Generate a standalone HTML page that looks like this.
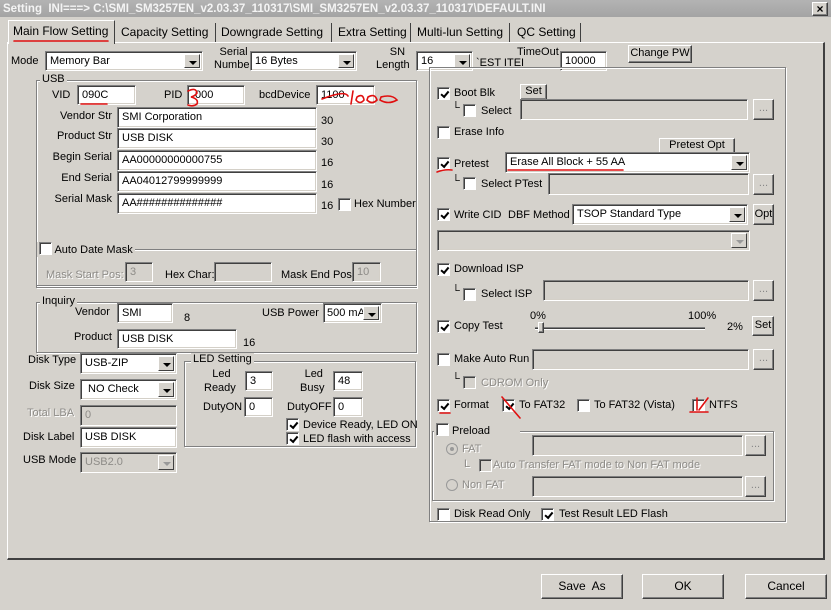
<!DOCTYPE html>
<html><head><meta charset="utf-8">
<style>
*{margin:0;padding:0;box-sizing:border-box}
body{width:831px;height:610px;background:#d5d2cc;font-family:"Liberation Sans",Arial,sans-serif;font-size:11px;color:#000;position:relative;overflow:hidden}
div,span{position:absolute}
.t{white-space:nowrap;line-height:14px}
.g{color:#8e8c88;text-shadow:1px 1px 0 #fff}
.in{background:#fff;border-top:1px solid #808080;border-left:1px solid #808080;border-bottom:1px solid #fff;border-right:1px solid #fff;box-shadow:inset 1px 1px 0 #404040,inset -1px -1px 0 #d4d0c8;padding:3px 4px;line-height:13px;white-space:nowrap;overflow:hidden}
.dis{background:#d5d2cc;color:#8e8c88}
.btn{background:#d5d2cc;border-top:1px solid #fff;border-left:1px solid #fff;border-right:1px solid #404040;border-bottom:1px solid #404040;box-shadow:inset -1px -1px 0 #808080;text-align:center;white-space:nowrap}
.dd{position:absolute;right:2px;top:2px;bottom:2px;width:16px;background:#d5d2cc;border-top:1px solid #fff;border-left:1px solid #fff;border-right:1px solid #404040;border-bottom:1px solid #404040}
.dd:after{content:"";position:absolute;left:4px;top:6px;border-left:4px solid transparent;border-right:4px solid transparent;border-top:4px solid #000}
.ddg:after{border-top-color:#999}
.cb{width:13px;height:13px;background:#fff;border-top:1px solid #808080;border-left:1px solid #808080;border-bottom:1px solid #fff;border-right:1px solid #fff;box-shadow:inset 1px 1px 0 #404040}
.cb.dcb{background:#d5d2cc}
.ck:after{content:"";position:absolute;left:2px;top:1px;width:6px;height:3px;border-left:2px solid #000;border-bottom:2px solid #000;transform:rotate(-50deg) translate(-1px,2px)}
.grp{border:1px solid #808080;box-shadow:1px 1px 0 #fff, inset 1px 1px 0 #fff}
.lg{background:#d5d2cc;padding:0 2px;line-height:13px;white-space:nowrap}
.r{text-align:right}
</style></head><body>
<div style="left:0;top:0;width:831px;height:17px;background:linear-gradient(#b3b3b3,#a4a4a4)"></div>
<div class="t" style="left:3px;top:2px;color:#f4f4f4;font-weight:bold;font-size:11.5px">Setting&nbsp; INI===&gt; C:\SMI_SM3257EN_v2.03.37_110317\SMI_SM3257EN_v2.03.37_110317\DEFAULT.INI</div>
<div class="btn" style="left:812px;top:2px;width:16px;height:14px;font-size:12px;font-weight:bold;line-height:12px">×</div>
<div style="left:7px;top:42px;width:818px;height:518px;border-top:1px solid #fff;border-left:1px solid #fff;border-right:2px solid #404040;border-bottom:2px solid #404040"></div>
<div style="left:8px;top:20px;width:107px;height:24px;background:#d5d2cc;border-top:1px solid #fff;border-left:1px solid #fff;border-right:1px solid #404040"></div>
<div class="t" style="left:13px;top:24px;font-size:12px">Main Flow Setting</div>
<div class="t" style="left:121px;top:25px;font-size:12px">Capacity Setting</div>
<div style="left:215px;top:23px;width:1px;height:19px;background:#404040"></div>
<div class="t" style="left:221px;top:25px;font-size:12px">Downgrade Setting</div>
<div style="left:331px;top:23px;width:1px;height:19px;background:#404040"></div>
<div class="t" style="left:338px;top:25px;font-size:12px">Extra Setting</div>
<div style="left:410px;top:23px;width:1px;height:19px;background:#404040"></div>
<div class="t" style="left:417px;top:25px;font-size:12px">Multi-lun Setting</div>
<div style="left:509px;top:23px;width:1px;height:19px;background:#404040"></div>
<div class="t" style="left:517px;top:25px;font-size:12px">QC Setting</div>
<div style="left:580px;top:23px;width:1px;height:19px;background:#404040"></div>

<div class="t" style="left:11px;top:54px">Mode</div>
<div class="in" style="left:45px;top:51px;width:158px;height:20px">Memory Bar<span class="dd"></span></div>
<div class="t" style="left:214px;top:46px;text-align:center;line-height:13px">Serial<br>Number</div>
<div class="in" style="left:250px;top:51px;width:107px;height:20px">16 Bytes<span class="dd"></span></div>
<div class="t" style="left:376px;top:46px;text-align:center;line-height:13px">&nbsp;&nbsp;&nbsp;SN<br>Length</div>
<div class="in" style="left:416px;top:51px;width:57px;height:20px">16<span class="dd"></span></div>
<div class="t" style="left:476px;top:56px">`EST ITEI</div>
<div class="t" style="left:517px;top:45px">TimeOut</div>
<div class="in" style="left:560px;top:51px;width:47px;height:20px">10000</div>
<div class="btn" style="left:628px;top:45px;width:64px;height:18px;line-height:15px">Change PW</div>

<div class="grp" style="left:36px;top:80px;width:381px;height:208px"></div>
<div class="lg" style="left:40px;top:73px">USB</div>
<div class="t" style="left:52px;top:88px">VID</div>
<div class="in" style="left:77px;top:85px;width:59px;height:20px">090C</div>
<div class="t" style="left:164px;top:88px">PID</div>
<div class="in" style="left:187px;top:85px;width:58px;height:20px">&nbsp;000</div>
<div class="t" style="left:259px;top:88px">bcdDevice</div>
<div class="in" style="left:316px;top:85px;width:59px;height:20px">1100</div>
<div class="t r" style="left:40px;width:72px;top:109px">Vendor Str</div>
<div class="in" style="left:117px;top:107px;width:200px;height:21px">SMI Corporation</div>
<div class="t" style="left:321px;top:114px">30</div>
<div class="t r" style="left:40px;width:72px;top:129px">Product Str</div>
<div class="in" style="left:117px;top:128px;width:200px;height:21px">USB DISK</div>
<div class="t" style="left:321px;top:135px">30</div>
<div class="t r" style="left:40px;width:72px;top:150px">Begin Serial</div>
<div class="in" style="left:117px;top:150px;width:200px;height:21px">AA00000000000755</div>
<div class="t" style="left:321px;top:156px">16</div>
<div class="t r" style="left:40px;width:72px;top:171px">End Serial</div>
<div class="in" style="left:117px;top:171px;width:200px;height:21px">AA04012799999999</div>
<div class="t" style="left:321px;top:178px">16</div>
<div class="t r" style="left:40px;width:72px;top:192px">Serial Mask</div>
<div class="in" style="left:117px;top:193px;width:200px;height:21px">AA##############</div>
<div class="t" style="left:321px;top:199px">16</div>
<div class="cb" style="left:338px;top:198px"></div>
<div class="t" style="left:354px;top:197px">Hex Number</div>
<div class="grp" style="left:36px;top:249px;width:381px;height:37px"></div>
<div class="lg" style="left:37px;top:242px;padding-left:2px"><span class="cb" style="position:relative;display:inline-block;vertical-align:-2px"></span> Auto Date Mask</div>
<div class="t g" style="left:46px;top:268px">Mask Start Pos:</div>
<div class="in dis" style="left:125px;top:262px;width:28px;height:20px">3</div>
<div class="t" style="left:165px;top:268px">Hex Char:</div>
<div class="in dis" style="left:214px;top:262px;width:58px;height:20px"></div>
<div class="t" style="left:281px;top:268px">Mask End Pos:</div>
<div class="in dis" style="left:352px;top:262px;width:29px;height:20px">10</div>

<div class="grp" style="left:36px;top:302px;width:381px;height:51px"></div>
<div class="lg" style="left:40px;top:295px">Inquiry</div>
<div class="t" style="left:75px;top:305px">Vendor</div>
<div class="in" style="left:117px;top:303px;width:56px;height:20px">SMI</div>
<div class="t" style="left:184px;top:311px">8</div>
<div class="t" style="left:262px;top:306px">USB Power</div>
<div class="in" style="left:323px;top:303px;width:59px;height:20px;padding-left:3px">500 mA<span class="dd"></span></div>
<div class="t" style="left:74px;top:330px">Product</div>
<div class="in" style="left:117px;top:329px;width:120px;height:20px">USB DISK</div>
<div class="t" style="left:243px;top:336px">16</div>

<div class="t" style="left:28px;top:353px">Disk Type</div>
<div class="in" style="left:80px;top:353px;width:97px;height:21px">USB-ZIP<span class="dd"></span></div>
<div class="t" style="left:29px;top:379px">Disk Size</div>
<div class="in" style="left:80px;top:379px;width:97px;height:21px">&nbsp;NO Check<span class="dd"></span></div>
<div class="t g" style="left:27px;top:406px">Total LBA</div>
<div class="in dis" style="left:80px;top:405px;width:97px;height:21px">0</div>
<div class="t" style="left:23px;top:430px">Disk Label</div>
<div class="in" style="left:80px;top:427px;width:97px;height:21px">USB DISK</div>
<div class="t" style="left:23px;top:453px">USB Mode</div>
<div class="in dis" style="left:80px;top:452px;width:97px;height:21px">USB2.0<span class="dd ddg"></span></div>

<div class="grp" style="left:184px;top:361px;width:232px;height:86px"></div>
<div class="lg" style="left:191px;top:353px">LED Setting</div>
<div class="t" style="left:204px;top:367px;text-align:center;line-height:14px">&nbsp;Led<br>Ready</div>
<div class="in" style="left:245px;top:371px;width:28px;height:20px">3</div>
<div class="t" style="left:300px;top:367px;text-align:center;line-height:14px">&nbsp;Led<br>Busy</div>
<div class="in" style="left:333px;top:371px;width:30px;height:20px">48</div>
<div class="t" style="left:203px;top:400px">DutyON</div>
<div class="in" style="left:244px;top:397px;width:29px;height:20px">0</div>
<div class="t" style="left:287px;top:400px">DutyOFF</div>
<div class="in" style="left:333px;top:397px;width:30px;height:20px">0</div>
<div class="cb ck" style="left:286px;top:418px"></div>
<div class="t" style="left:303px;top:418px">Device Ready, LED ON</div>
<div class="cb ck" style="left:286px;top:432px"></div>
<div class="t" style="left:303px;top:432px">LED flash with access</div>

<div class="grp" style="left:429px;top:67px;width:357px;height:455px"></div>
<div class="cb ck" style="left:437px;top:87px"></div>
<div class="t" style="left:454px;top:86px">Boot Blk</div>
<div class="btn" style="left:520px;top:84px;width:27px;height:16px;line-height:13px">Set</div>
<div class="t" style="left:452px;top:101px">└</div>
<div class="cb" style="left:463px;top:104px"></div>
<div class="t" style="left:481px;top:104px">Select</div>
<div class="in dis" style="left:520px;top:99px;width:228px;height:21px"></div>
<div class="btn" style="left:753px;top:99px;width:21px;height:21px;color:#888;line-height:16px">...</div>
<div class="cb" style="left:437px;top:126px"></div>
<div class="t" style="left:454px;top:125px">Erase Info</div>
<div class="btn" style="left:659px;top:138px;width:76px;height:16px;line-height:13px">Pretest Opt</div>
<div class="cb ck" style="left:437px;top:157px"></div>
<div class="t" style="left:454px;top:157px">Pretest</div>
<div class="in" style="left:505px;top:152px;width:245px;height:21px">Erase All Block + 55 AA<span class="dd"></span></div>
<div class="t" style="left:452px;top:174px">└</div>
<div class="cb" style="left:463px;top:177px"></div>
<div class="t" style="left:481px;top:177px">Select PTest</div>
<div class="in dis" style="left:548px;top:173px;width:201px;height:22px"></div>
<div class="btn" style="left:753px;top:174px;width:21px;height:21px;color:#888;line-height:16px">...</div>
<div class="cb ck" style="left:437px;top:208px"></div>
<div class="t" style="left:454px;top:208px">Write CID</div>
<div class="t" style="left:508px;top:208px">DBF Method</div>
<div class="in" style="left:572px;top:204px;width:176px;height:21px">TSOP Standard Type<span class="dd"></span></div>
<div class="btn" style="left:753px;top:204px;width:21px;height:21px;line-height:18px">Opt</div>
<div class="in dis" style="left:437px;top:230px;width:313px;height:21px"><span class="dd ddg"></span></div>
<div class="cb ck" style="left:437px;top:263px"></div>
<div class="t" style="left:454px;top:262px">Download ISP</div>
<div class="t" style="left:452px;top:284px">└</div>
<div class="cb" style="left:463px;top:288px"></div>
<div class="t" style="left:481px;top:287px">Select ISP</div>
<div class="in dis" style="left:543px;top:280px;width:206px;height:21px"></div>
<div class="btn" style="left:753px;top:280px;width:21px;height:21px;color:#888;line-height:16px">...</div>
<div class="cb ck" style="left:437px;top:320px"></div>
<div class="t" style="left:454px;top:319px">Copy Test</div>
<div class="t" style="left:530px;top:309px">0%</div>
<div class="t" style="left:688px;top:309px">100%</div>
<div style="left:535px;top:327px;width:170px;height:3px;border-top:1px solid #808080;border-bottom:1px solid #fff;background:#404040"></div>
<div class="btn" style="left:538px;top:322px;width:6px;height:11px"></div>
<div class="t" style="left:727px;top:320px">2%</div>
<div class="btn" style="left:752px;top:316px;width:22px;height:20px;line-height:17px">Set</div>
<div class="cb" style="left:437px;top:353px"></div>
<div class="t" style="left:454px;top:352px">Make Auto Run</div>
<div class="in dis" style="left:532px;top:349px;width:217px;height:21px"></div>
<div class="btn" style="left:753px;top:349px;width:21px;height:21px;color:#888;line-height:16px">...</div>
<div class="t" style="left:452px;top:372px">└</div>
<div class="cb dcb" style="left:463px;top:376px"></div>
<div class="t g" style="left:481px;top:376px">CDROM Only</div>
<div class="cb ck" style="left:437px;top:399px"></div>
<div class="t" style="left:454px;top:398px">Format</div>
<div class="cb ck" style="left:502px;top:399px"></div>
<div class="t" style="left:519px;top:398px">To FAT32</div>
<div class="cb" style="left:577px;top:399px"></div>
<div class="t" style="left:594px;top:398px">To FAT32 (Vista)</div>
<div class="cb" style="left:692px;top:399px"></div>
<div class="t" style="left:709px;top:398px">NTFS</div>
<div class="grp" style="left:432px;top:431px;width:342px;height:70px"></div>
<div class="lg" style="left:434px;top:423px;padding-right:30px"><span class="cb" style="position:relative;display:inline-block;vertical-align:-2px"></span> Preload</div>
<div style="left:446px;top:443px;width:12px;height:12px;border-radius:50%;background:#d5d2cc;border:1px solid #999"><span style="left:3px;top:3px;width:4px;height:4px;border-radius:50%;background:#999"></span></div>
<div class="t g" style="left:462px;top:442px">FAT</div>
<div class="in dis" style="left:532px;top:435px;width:211px;height:21px"></div>
<div class="btn" style="left:745px;top:435px;width:21px;height:21px;color:#888;line-height:16px">...</div>
<div class="t g" style="left:464px;top:457px">L</div>
<div class="cb dcb" style="left:479px;top:459px"></div>
<div class="t g" style="left:493px;top:458px">Auto Transfer FAT mode to Non FAT mode</div>
<div style="left:446px;top:479px;width:12px;height:12px;border-radius:50%;background:#d5d2cc;border:1px solid #999"></div>
<div class="t g" style="left:462px;top:478px">Non FAT</div>
<div class="in dis" style="left:532px;top:476px;width:211px;height:21px"></div>
<div class="btn" style="left:745px;top:476px;width:21px;height:21px;color:#888;line-height:16px">...</div>
<div class="cb" style="left:437px;top:508px"></div>
<div class="t" style="left:454px;top:507px">Disk Read Only</div>
<div class="cb ck" style="left:541px;top:508px"></div>
<div class="t" style="left:559px;top:507px">Test Result LED Flash</div>

<div class="btn" style="left:541px;top:574px;width:82px;height:25px;line-height:22px;font-size:12px">Save&nbsp; As</div>
<div class="btn" style="left:642px;top:574px;width:82px;height:25px;line-height:22px;font-size:12px">OK</div>
<div class="btn" style="left:745px;top:574px;width:82px;height:25px;line-height:22px;font-size:12px">Cancel</div>

<svg style="position:absolute;left:0;top:0" width="831" height="610" fill="none" stroke="#e01010" stroke-width="1.6" stroke-linecap="round">
<path d="M14 41 L108 41"/>
<path d="M81 104 L107 104"/>
<path d="M188 91 Q196 87 197 93 Q195 96 191 97 Q199 99 197 104 Q193 107 188 105"/>
<path d="M322 99 Q345 90 348 96 M353 91 L351 104 M357 97 Q363 93 364 100 Q360 105 356 100 Z M368 97 Q375 93 377 100 Q372 105 367 100 Z M381 97 Q392 94 397 100 Q388 105 380 100 Z"/>
<path d="M437 172 Q445 169 452 170"/>
<path d="M508 170 L623 170"/>
<path d="M440 413 L450 413"/>
<path d="M502 397 L520 418"/>
<path d="M690 412 L708 412 M697 398 L697 410 M699 410 L708 398"/>
</svg>
</body></html>
